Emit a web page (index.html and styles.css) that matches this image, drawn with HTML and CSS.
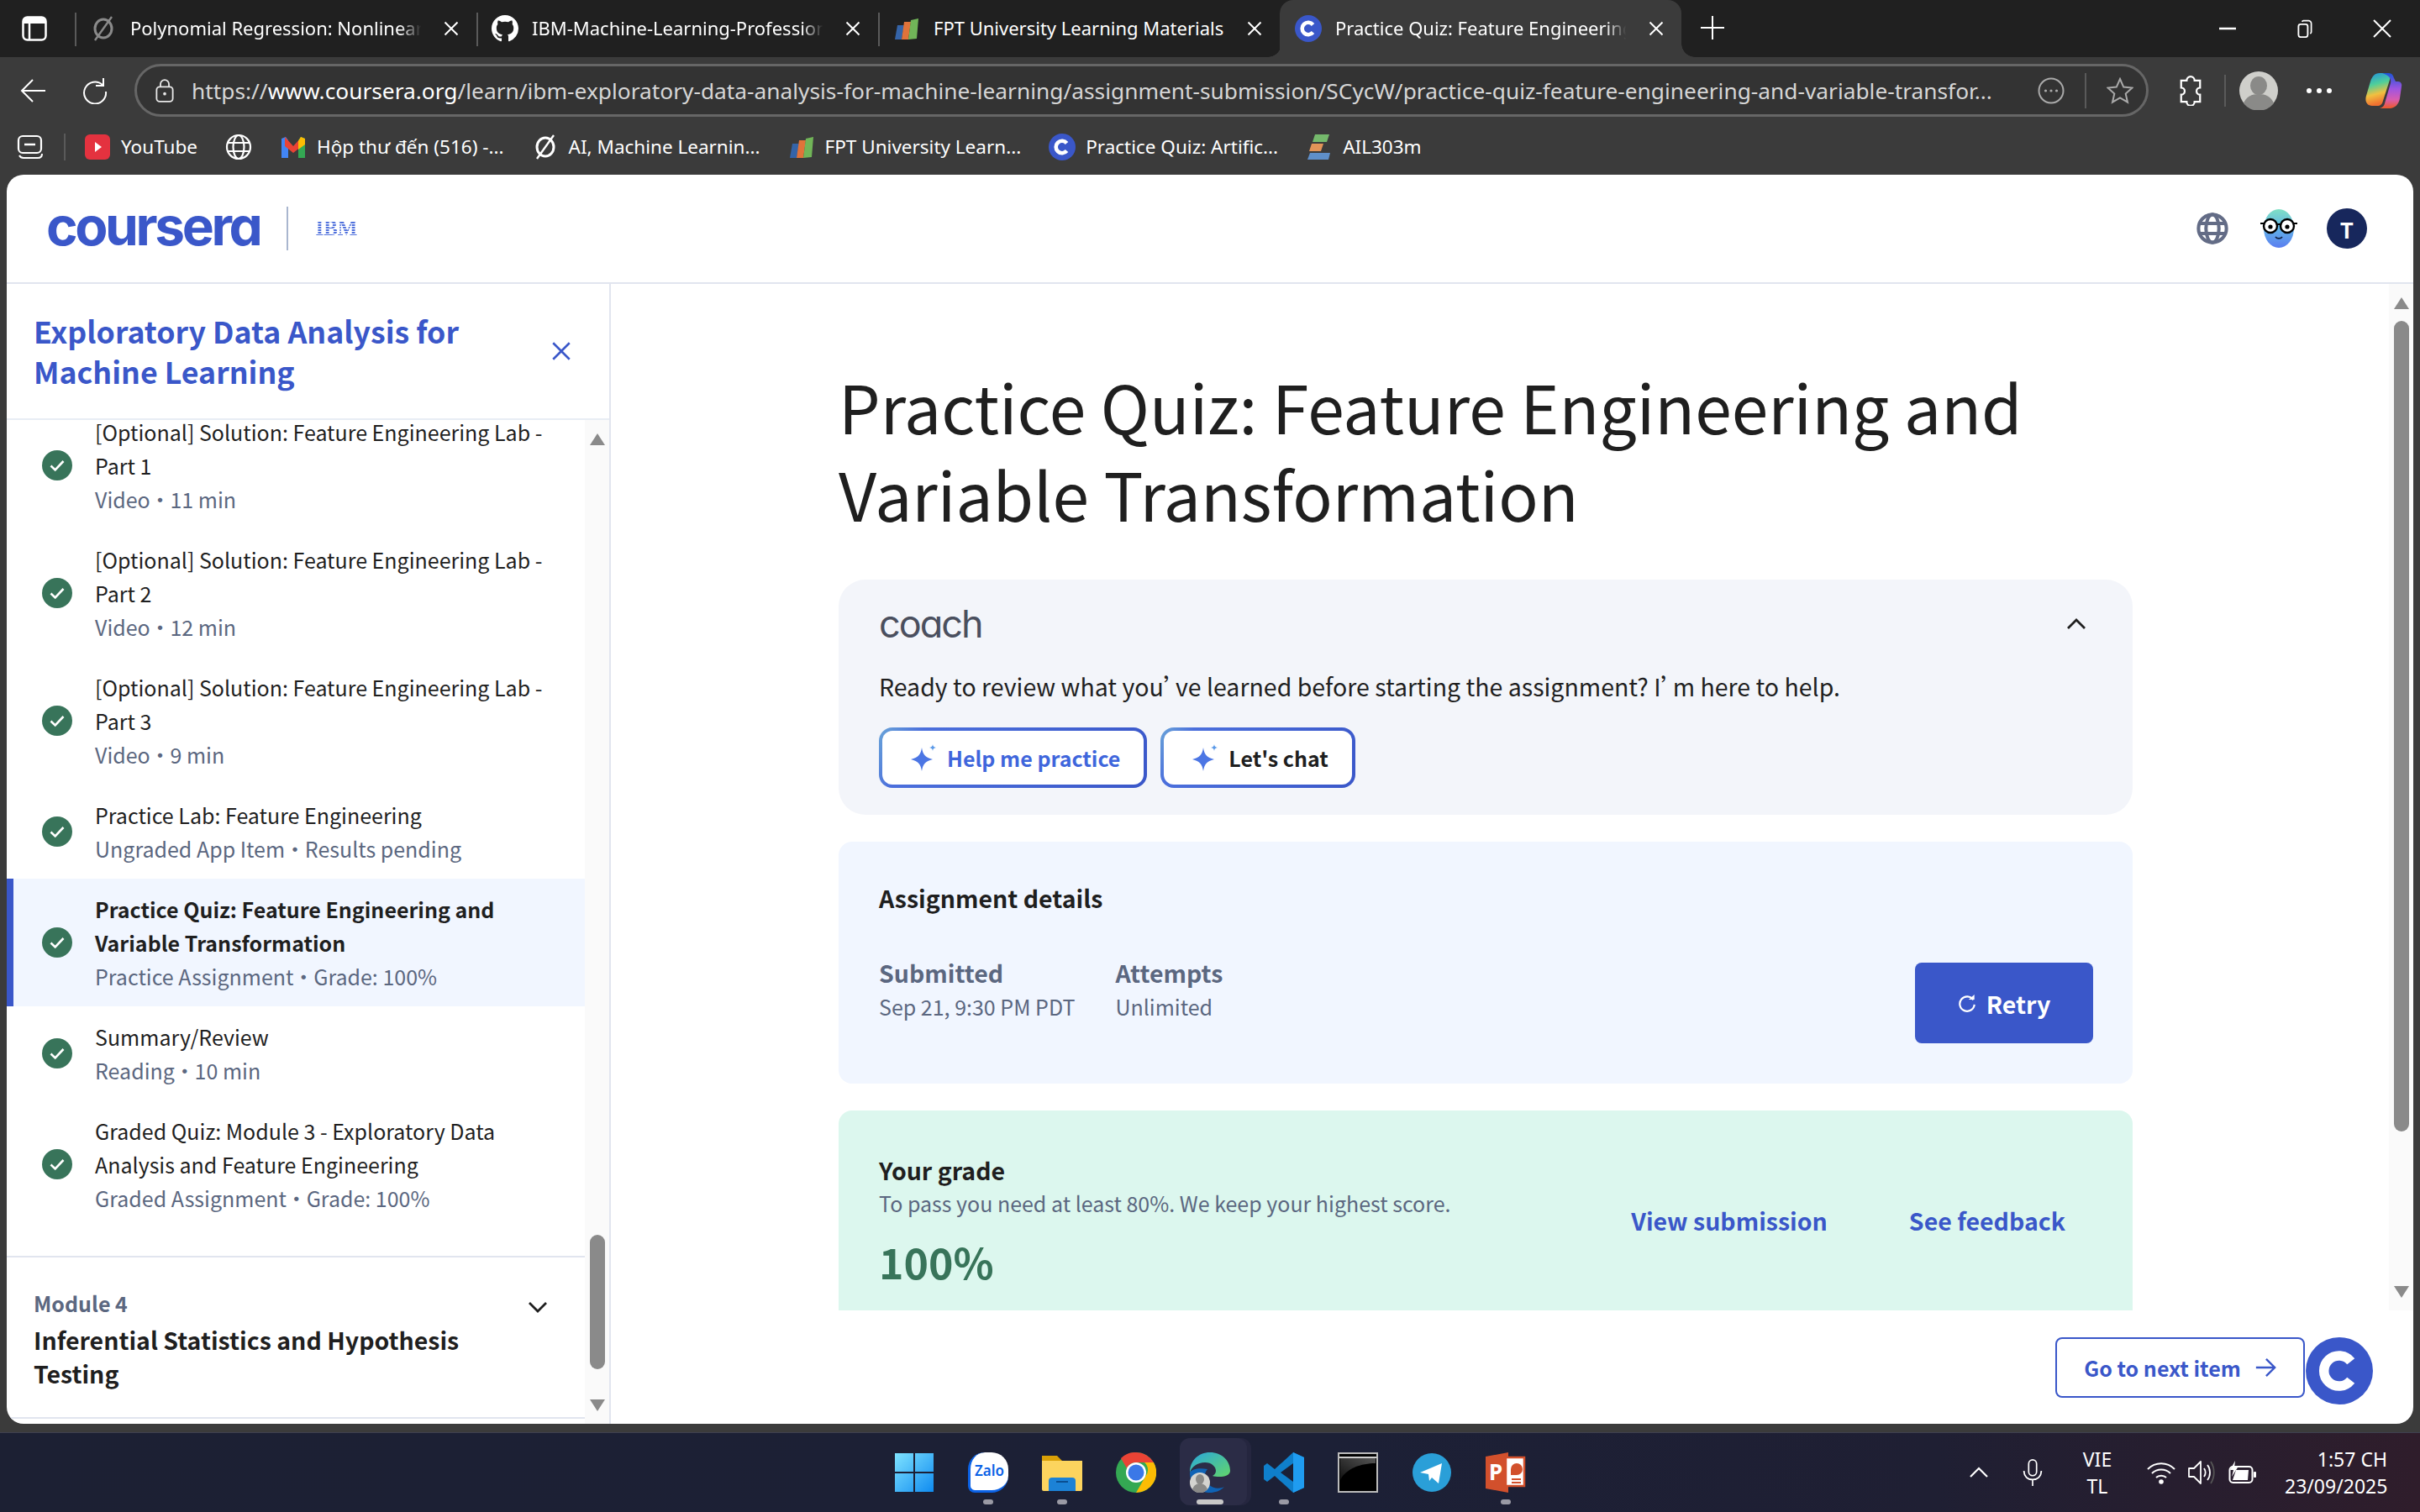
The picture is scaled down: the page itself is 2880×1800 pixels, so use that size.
FILE: index.html
```html
<!DOCTYPE html>
<html lang="en">
<head>
    <meta charset="UTF-8">
    <meta name="viewport" content="width=device-width, initial-scale=1.0">
    <title>Practice Quiz: Feature Engineering and Variable Transformation</title>
    <link rel="stylesheet" href="styles.css">
</head>
<body>
    <svg class="defs" width="0" height="0">
        <symbol id="i-close" viewBox="0 0 24 24"><path d="M3 3l18 18M21 3L3 21" fill="none" stroke="currentColor" stroke-width="2.4"/></symbol>
        <symbol id="i-c" viewBox="0 0 32 32"><circle cx="16" cy="16" r="16" fill="#3a57c9"/><path d="M21.5 11.5a7.2 7.2 0 1 0 0 9" fill="none" stroke="#fff" stroke-width="4.6"/></symbol>
        <symbol id="i-slash" viewBox="0 0 32 32"><ellipse cx="16" cy="16" rx="10" ry="11" fill="none" stroke="currentColor" stroke-width="3"/><path d="M6 30L26 2" stroke="currentColor" stroke-width="2.4"/></symbol>
        <symbol id="i-fpt" viewBox="0 0 32 32"><path d="M5 12h8l-3 17H2z" fill="#3564a8"/><path d="M13 8h8l-3 21h-8z" fill="#e0733a"/><path d="M21 6l9-2-2 24-10 1z" fill="#71b558"/></symbol>
        <symbol id="i-check" viewBox="0 0 36 36"><circle cx="18" cy="18" r="18" fill="#38745a"/><path d="M10.5 18.5l5.2 5L25.5 13" fill="none" stroke="#fff" stroke-width="2.6"/></symbol>
        <symbol id="i-spark" viewBox="0 0 32 32"><path d="M13 4c1.4 8.600 4 11.400 13 14-9 2.600-11.600 5.400-13 14-1.400-8.600-4-11.400-13-14 9-2.600 11.600-5.400 13-14z" fill="#4c76e4"/><path d="M26 0c.4 2.600 1.200 3.500 4 4-2.800.5-3.600 1.400-4 4-.4-2.600-1.200-3.500-4-4 2.800-.5 3.600-1.400 4-4z" fill="#5b9ae8"/></symbol>
        <symbol id="i-globe" viewBox="0 0 32 32"><g fill="none" stroke="currentColor"><circle cx="16" cy="16" r="14"/><ellipse cx="16" cy="16" rx="6.5" ry="14"/><path d="M3 11h26M3 21h26"/></g></symbol>
    </svg>

    <div class="browser">
        <div class="tabbar">
            <div class="tabbar-start">
                <svg class="sidebar-toggle" viewBox="0 0 30 30"><rect x="1.5" y="1.5" width="27" height="27" rx="5" fill="none" stroke="#fff" stroke-width="2.5"/><path d="M2 7a5 5 0 0 1 5-5h16a5 5 0 0 1 5 5v2H2z" fill="#fff"/><path d="M9 8v20" stroke="#fff" stroke-width="2.5"/></svg>
            </div>
            <div class="tab">
                <svg class="tab-icon tab-icon--muted"><use href="#i-slash"/></svg>
                <span class="tab-title">Polynomial Regression: Nonlinear</span>
                <svg class="tab-close"><use href="#i-close"/></svg>
            </div>
            <div class="tab">
                <svg class="tab-icon" viewBox="0 0 16 16"><path fill="#fff" d="M8 0C3.580 0 0 3.580 0 8c0 3.540 2.290 6.530 5.470 7.590.4.070.55-.17.55-.38 0-.19-.01-.82-.01-1.490-2.010.37-2.530-.49-2.690-.94-.09-.23-.48-.94-.82-1.130-.28-.15-.68-.52-.01-.53.63-.01 1.080.58 1.230.82.72 1.210 1.870.87 2.330.66.07-.52.28-.87.51-1.070-1.780-.2-3.640-.89-3.640-3.950 0-.87.31-1.590.82-2.150-.08-.2-.36-1.020.08-2.120 0 0 .67-.21 2.200.82.64-.18 1.320-.27 2-.27.68 0 1.360.09 2 .27 1.530-1.040 2.200-.82 2.200-.82.44 1.100.16 1.920.08 2.120.51.56.82 1.270.82 2.150 0 3.070-1.870 3.750-3.650 3.950.29.25.54.73.54 1.480 0 1.070-.01 1.930-.01 2.200 0 .21.15.46.55.38A8.013 8.013 0 0016 8c0-4.420-3.580-8-8-8z"/></svg>
                <span class="tab-title">IBM-Machine-Learning-Profession</span>
                <svg class="tab-close"><use href="#i-close"/></svg>
            </div>
            <div class="tab">
                <svg class="tab-icon"><use href="#i-fpt"/></svg>
                <span class="tab-title tab-title--full">FPT University Learning Materials</span>
                <svg class="tab-close"><use href="#i-close"/></svg>
            </div>
            <div class="tab tab--active">
                <svg class="tab-icon"><use href="#i-c"/></svg>
                <span class="tab-title">Practice Quiz: Feature Engineering</span>
                <svg class="tab-close"><use href="#i-close"/></svg>
            </div>
            <svg class="new-tab" viewBox="0 0 28 28"><path d="M14 0v28M0 14h28" stroke="#fff" stroke-width="2"/></svg>
            <div class="window-controls">
                <svg viewBox="0 0 22 22"><path d="M1 11h20" stroke="#fff" stroke-width="2.5"/></svg>
                <svg viewBox="0 0 22 26"><rect x="2" y="7" width="13" height="18" rx="3" fill="none" stroke="#fff" stroke-width="2.2"/><path d="M7 3.500a3 3 0 0 1 2-1.500h7a4 4 0 0 1 4 4v12a3 3 0 0 1-1.500 2" fill="none" stroke="#fff" stroke-width="2"/></svg>
                <svg viewBox="0 0 22 22"><path d="M1 1l20 20M21 1L1 21" stroke="#fff" stroke-width="2"/></svg>
            </div>
        </div>

        <div class="toolbar">
            <svg class="tool-icon tool-icon--back" viewBox="0 0 32 32"><path d="M30 16H2M15 3L2 16l13 13" fill="none" stroke="#fff" stroke-width="2"/></svg>
            <svg class="tool-icon tool-icon--reload" viewBox="0 0 32 32"><path d="M26 9a13 13 0 1 0 4 8" fill="none" stroke="#fff" stroke-width="2"/><path d="M27 1v9h-9" fill="none" stroke="#fff" stroke-width="2"/></svg>
            <div class="address">
                <svg class="lock" viewBox="0 0 24 32"><rect x="1.5" y="11" width="21" height="19" rx="4" fill="none" stroke="#e8e8e8" stroke-width="2"/><path d="M6.500 11V7.500a5.500 5.500 0 0 1 11 0V11" fill="none" stroke="#e8e8e8" stroke-width="2"/><circle cx="12" cy="20" r="2" fill="#e8e8e8"/></svg>
                <span class="url"><span class="url-dim">https://</span>www.coursera.org<span class="url-dim">/learn/ibm-exploratory-data-analysis-for-machine-learning/assignment-submission/SCycW/practice-quiz-feature-engineering-and-variable-transfor...</span></span>
                <svg class="addr-more" viewBox="0 0 32 32"><circle cx="16" cy="16" r="14.5" fill="none" stroke="#aaa" stroke-width="2"/><circle cx="9.5" cy="16" r="1.6" fill="#aaa"/><circle cx="16" cy="16" r="1.6" fill="#aaa"/><circle cx="22.5" cy="16" r="1.6" fill="#aaa"/></svg>
                <span class="addr-sep"></span>
                <svg class="addr-star" viewBox="0 0 32 32"><path d="M16 2l4.200 9.600 10.300 1-7.800 6.900 2.300 10.200L16 24.400l-9 5.300 2.300-10.200-7.800-6.900 10.300-1z" fill="none" stroke="#aaa" stroke-width="2"/></svg>
            </div>
            <svg class="extensions" viewBox="0 0 32 38"><path d="M11 6a5 5 0 0 1 10 0h7v9a4.500 4.500 0 0 0 0 9v9h-7a5 5 0 0 1-10 0H4v-9a4.500 4.500 0 0 0 0-9V6z" fill="none" stroke="#fff" stroke-width="2.4"/></svg>
            <span class="tool-sep"></span>
            <svg class="profile" viewBox="0 0 46 46"><circle cx="23" cy="23" r="23" fill="#cfcfcb"/><ellipse cx="23" cy="17" rx="10" ry="11" fill="#8a8a88"/><path d="M5 38c3-8 10-11 18-11s15 3 18 11a23 23 0 0 1-36 0z" fill="#8a8a88"/></svg>
            <span class="tool-dots"><i></i><i></i><i></i></span>
            <svg class="copilot" viewBox="0 0 44 44">
                <defs>
                    <linearGradient id="cp-a" x1="0" y1="0" x2="0.2" y2="1"><stop offset="0" stop-color="#1f8ee0"/><stop offset=".4" stop-color="#4fcf9a"/><stop offset=".7" stop-color="#f0c040"/><stop offset="1" stop-color="#f07030"/></linearGradient>
                    <linearGradient id="cp-b" x1="0.5" y1="0" x2="0.5" y2="1"><stop offset="0" stop-color="#1d55d8"/><stop offset=".45" stop-color="#a055e0"/><stop offset=".75" stop-color="#d85cb0"/><stop offset="1" stop-color="#ee5a28"/></linearGradient>
                </defs>
                <path d="M26 1h-9C11 1 8 5 6 11L1 28c-2 7 1 12 7 12h6c4 0 6-2 7-6l8-25c1-4 0-8-3-8z" fill="url(#cp-a)"/>
                <path d="M20 1h8c3 0 5 2 6 6l2 4h3c3 0 5 3 4 6l-2 14c-1 7-6 12-12 12h-14c4 0 7-2 8-6l7-24c1-5-1-9-10-12z" fill="url(#cp-b)"/>
            </svg>
        </div>

        <div class="bookmarks">
            <svg class="bm-collections" viewBox="0 0 32 32"><rect x="2" y="3" width="27" height="20" rx="5" fill="none" stroke="#fff" stroke-width="2.2"/><path d="M3 26c1 2 3 3 5 3h17c3 0 5-2 5-5" fill="none" stroke="#fff" stroke-width="2"/><path d="M9 13h13" stroke="#fff" stroke-width="2.5"/></svg>
            <span class="bm-sep"></span>
            <div class="bm"><svg viewBox="0 0 32 32"><rect x="1" y="1" width="30" height="30" rx="6" fill="#e4323f"/><path d="M13 10l8 6-8 6z" fill="#fff"/></svg><span>YouTube</span></div>
            <div class="bm"><svg class="bm-white"><use href="#i-globe"/></svg></div>
            <div class="bm"><svg viewBox="0 0 32 32"><path d="M2 29V6l5-2 3 4v21z" fill="#4285f4"/><path d="M30 29V6l-5-2-3 4v21z" fill="#34a853"/><path d="M6 4l10 11L26 4v11l-10 8L6 15z" fill="#ea4335"/><path d="M25 4l5 2v7l-8 6V9z" fill="#fbbc04"/></svg><span>Hộp thư đến (516) -...</span></div>
            <div class="bm"><svg class="bm-slash"><use href="#i-slash"/></svg><span>AI, Machine Learnin...</span></div>
            <div class="bm"><svg><use href="#i-fpt"/></svg><span>FPT University Learn...</span></div>
            <div class="bm"><svg><use href="#i-c"/></svg><span>Practice Quiz: Artific...</span></div>
            <div class="bm"><svg viewBox="0 0 32 32"><path d="M11 1h17l-3 9H8z" fill="#75b96c"/><path d="M7 12h14l-3 9H4z" fill="#e29458"/><path d="M5 23h24l-2 8H2z" fill="#5f8fc9"/></svg><span>AIL303m</span></div>
        </div>

        <div class="page">
            <header class="page-head">
                <span class="logo">coursera</span>
                <span class="logo-sep"></span>
                <span class="logo-ibm">IBM</span>
                <div class="head-actions">
                    <svg class="head-globe"><use href="#i-globe"/></svg>
                    <svg class="head-coach" viewBox="0 0 46 46">
                        <defs><linearGradient id="co-a" x1="0.5" y1="0" x2="0.5" y2="1"><stop offset="0" stop-color="#7fe0c4"/><stop offset=".5" stop-color="#62b3e8"/><stop offset="1" stop-color="#5a7df0"/></linearGradient></defs>
                        <ellipse cx="23" cy="23" rx="18" ry="23" fill="url(#co-a)"/>
                        <circle cx="13" cy="20" r="8" fill="#fff" stroke="#000" stroke-width="2.4"/>
                        <circle cx="33" cy="20" r="8" fill="#fff" stroke="#000" stroke-width="2.4"/>
                        <path d="M21 18h4M5 17H1M41 17h4" stroke="#000" stroke-width="2"/>
                        <circle cx="13" cy="21" r="2.6"/><circle cx="33" cy="21" r="2.6"/>
                        <path d="M19 33c2 2.500 6 2.500 8 0" fill="none" stroke="#102040" stroke-width="1.8"/>
                    </svg>
                    <span class="head-user">T</span>
                </div>
            </header>

            <div class="page-body">
                <aside class="sidebar">
                    <div class="side-head">
                        <h2>Exploratory Data Analysis for Machine Learning</h2>
                        <svg class="side-close"><use href="#i-close"/></svg>
                    </div>
                    <div class="side-scroll">
                        <div class="side-list">
                            <div class="item">
                                <svg class="item-check"><use href="#i-check"/></svg>
                                <div class="item-text"><div class="item-name">[Optional] Solution: Feature Engineering Lab - Part 1</div><div class="item-meta">Video • 11 min</div></div>
                            </div>
                            <div class="item">
                                <svg class="item-check"><use href="#i-check"/></svg>
                                <div class="item-text"><div class="item-name">[Optional] Solution: Feature Engineering Lab - Part 2</div><div class="item-meta">Video • 12 min</div></div>
                            </div>
                            <div class="item">
                                <svg class="item-check"><use href="#i-check"/></svg>
                                <div class="item-text"><div class="item-name">[Optional] Solution: Feature Engineering Lab - Part 3</div><div class="item-meta">Video • 9 min</div></div>
                            </div>
                            <div class="item">
                                <svg class="item-check"><use href="#i-check"/></svg>
                                <div class="item-text"><div class="item-name">Practice Lab: Feature Engineering</div><div class="item-meta">Ungraded App Item • Results pending</div></div>
                            </div>
                            <div class="item item--current">
                                <svg class="item-check"><use href="#i-check"/></svg>
                                <div class="item-text"><div class="item-name">Practice Quiz: Feature Engineering and Variable Transformation</div><div class="item-meta">Practice Assignment • Grade: 100%</div></div>
                            </div>
                            <div class="item">
                                <svg class="item-check"><use href="#i-check"/></svg>
                                <div class="item-text"><div class="item-name">Summary/Review</div><div class="item-meta">Reading • 10 min</div></div>
                            </div>
                            <div class="item">
                                <svg class="item-check"><use href="#i-check"/></svg>
                                <div class="item-text"><div class="item-name">Graded Quiz: Module 3 - Exploratory Data Analysis and Feature Engineering</div><div class="item-meta">Graded Assignment • Grade: 100%</div></div>
                            </div>
                            <div class="module">
                                <div class="module-text">
                                    <div class="module-label">Module 4</div>
                                    <div class="module-title">Inferential Statistics and Hypothesis Testing</div>
                                </div>
                                <svg class="module-chevron" viewBox="0 0 24 14"><path d="M2 2l10 10L22 2" fill="none" stroke="#1f1f1f" stroke-width="2.8"/></svg>
                            </div>
                        </div>
                        <div class="scrollbar scrollbar--side">
                            <span class="sb-up"></span>
                            <span class="sb-thumb"></span>
                            <span class="sb-down"></span>
                        </div>
                    </div>
                </aside>

                <main class="main">
                    <div class="main-scroll">
                        <div class="content">
                            <h1>Practice Quiz: Feature Engineering and Variable Transformation</h1>

                            <section class="coach">
                                <div class="coach-top">
                                    <span class="coach-logo">coach</span>
                                    <svg class="coach-chevron" viewBox="0 0 24 14"><path d="M2 12L12 2l10 10" fill="none" stroke="#1f1f1f" stroke-width="2.8"/></svg>
                                </div>
                                <p class="coach-text">Ready to review what you’ve learned before starting the assignment? I’m here to help.</p>
                                <div class="coach-actions">
                                    <button class="coach-btn coach-btn--blue"><svg><use href="#i-spark"/></svg>Help me practice</button>
                                    <button class="coach-btn"><svg><use href="#i-spark"/></svg>Let's chat</button>
                                </div>
                            </section>

                            <section class="details">
                                <h3>Assignment details</h3>
                                <div class="details-row">
                                    <div class="stat">
                                        <div class="stat-label">Submitted</div>
                                        <div class="stat-value">Sep 21, 9:30 PM PDT</div>
                                    </div>
                                    <div class="stat">
                                        <div class="stat-label">Attempts</div>
                                        <div class="stat-value">Unlimited</div>
                                    </div>
                                    <button class="retry"><svg viewBox="0 0 24 24"><path d="M20 8a9.500 9.500 0 1 0 1.500 6" fill="none" stroke="#fff" stroke-width="2.4"/><path d="M14 7.500h7.500V1z" fill="#fff"/></svg>Retry</button>
                                </div>
                            </section>

                            <section class="grade">
                                <div>
                                    <h3>Your grade</h3>
                                    <p class="grade-note">To pass you need at least 80%. We keep your highest score.</p>
                                    <div class="grade-value">100%</div>
                                </div>
                                <div class="grade-links">
                                    <a>View submission</a>
                                    <a>See feedback</a>
                                </div>
                            </section>
                        </div>
                        <div class="scrollbar scrollbar--main">
                            <span class="sb-up"></span>
                            <span class="sb-thumb"></span>
                            <span class="sb-down"></span>
                        </div>
                    </div>
                    <div class="main-foot">
                        <button class="next">Go to next item<svg viewBox="0 0 28 28"><path d="M2 14h23M15 3l11 11-11 11" fill="none" stroke="#3a57c9" stroke-width="2.6"/></svg></button>
                        <svg class="float-c"><use href="#i-c"/></svg>
                    </div>
                </main>
            </div>
        </div>
    </div>

    <footer class="taskbar">
        <div></div>
        <div class="task-apps">
            <div class="task-app">
                <svg viewBox="0 0 48 48">
                    <defs><linearGradient id="win-a" x1="0" y1="0" x2="1" y2="1"><stop offset="0" stop-color="#7fe3ff"/><stop offset="1" stop-color="#0f8bf0"/></linearGradient></defs>
                    <path d="M1 1h22v22H1zM25 1h22v22H25zM1 25h22v22H1zM25 25h22v22H25z" fill="url(#win-a)"/>
                </svg>
            </div>
            <div class="task-app">
                <div class="zalo">Zalo</div>
                <i class="task-dot"></i>
            </div>
            <div class="task-app">
                <svg viewBox="0 0 48 48"><path d="M0 4h18l6 6h24v34H0z" fill="#d9a006"/><path d="M0 10h48v34a2 2 0 0 1-2 2H2a2 2 0 0 1-2-2z" fill="#fcd45e"/><path d="M8 34a4 4 0 0 1 4-4h24a4 4 0 0 1 4 4v12H8z" fill="#1c82d6"/><path d="M17 35h14" stroke="#0a4f92" stroke-width="2"/></svg>
                <i class="task-dot"></i>
            </div>
            <div class="task-app">
                <svg viewBox="0 0 48 48"><circle cx="24" cy="24" r="24" fill="#34a853"/><path d="M24 0a24 24 0 0 1 21 12H24a12 12 0 0 0-11 7L6 7A24 24 0 0 1 24 0z" fill="#ea4335"/><path d="M45 12a24 24 0 0 1-21 36l11-19a12 12 0 0 0-1-17z" fill="#fbbc04"/><circle cx="24" cy="24" r="12" fill="#fff"/><circle cx="24" cy="24" r="9.5" fill="#3b78e7"/></svg>
            </div>
            <div class="task-app task-app--active">
                <svg viewBox="0 0 48 48">
                    <defs><linearGradient id="edge-a" x1="0" y1="0" x2="1" y2="1"><stop offset="0" stop-color="#2aa6dc"/><stop offset="1" stop-color="#62d66a"/></linearGradient></defs>
                    <path d="M24 0C10 0 0 10 0 24c2-7 9-12 18-12 8 0 13 5 13 10 0 3-2 5-4 6 6 2 21 2 21-6C48 10 38 0 24 0z" fill="url(#edge-a)"/>
                    <path d="M0 24c0 14 10 24 24 24 6 0 12-2 17-7-6 3-14 2-19-3-5-4-6-12-1-18-10-2-19 0-21 4z" fill="#0f63b5"/>
                    <ellipse cx="12" cy="36" rx="12" ry="12" fill="#d4d4d0"/><ellipse cx="12" cy="32" rx="5" ry="6" fill="#8a8a88"/><path d="M3 44c2-5 5-7 9-7s7 2 9 7a12 12 0 0 1-18 0z" fill="#8a8a88"/>
                </svg>
                <i class="task-dot task-dot--wide"></i>
            </div>
            <div class="task-app">
                <svg viewBox="0 0 48 48"><path d="M35 0l13 6v36l-13 6-22-20-9 7-4-3V16l4-3 9 7z" fill="#0f7fcb"/><path d="M35 0l13 6v36l-13 6z" fill="#1f9cf0"/><path d="M35 13L20 24l15 11z" fill="#1a2036"/></svg>
                <i class="task-dot"></i>
            </div>
            <div class="task-app">
                <svg viewBox="0 0 48 48">
                    <defs><linearGradient id="term-a" x1="1" y1="0" x2="0" y2="1"><stop offset="0" stop-color="#555"/><stop offset="1" stop-color="#111"/></linearGradient></defs>
                    <rect x="1" y="1" width="46" height="46" fill="#000" stroke="#bbb" stroke-width="2"/><path d="M2 5h44v2H2z" fill="#ccc"/><path d="M3 7h42v6C28 13 10 19 3 33z" fill="url(#term-a)"/>
                </svg>
            </div>
            <div class="task-app">
                <svg viewBox="0 0 48 48"><circle cx="24" cy="24" r="23" fill="#2a9fd8"/><path d="M10 24L36 13l-4 24-8-7-3 4-1-8z" fill="#fff"/></svg>
            </div>
            <div class="task-app">
                <svg viewBox="0 0 48 48">
                    <path d="M0 5l27-5v48L0 43z" fill="#d2502c"/>
                    <rect x="24" y="6" width="22" height="34" fill="#fff" stroke="#d2502c" stroke-width="2.5"/>
                    <path d="M30 20a7 7 0 1 1 7 7h-7z" fill="#d2502c"/><path d="M31 32h11M31 36h11" stroke="#d2502c" stroke-width="2"/>
                    <text x="4" y="33" class="ppt-letter">P</text>
                </svg>
                <i class="task-dot"></i>
            </div>
        </div>
        <div class="tray">
            <svg class="tray-caret" viewBox="0 0 24 14"><path d="M2 12L12 2l10 10" fill="none" stroke="#fff" stroke-width="2.2"/></svg>
            <svg class="tray-mic" viewBox="0 0 24 34"><rect x="7" y="1" width="10" height="20" rx="5" fill="none" stroke="#fff" stroke-width="1.8"/><path d="M1 15c0 7 5 11 11 11s11-4 11-11M12 26v8" fill="none" stroke="#fff" stroke-width="1.8"/></svg>
            <div class="tray-lang"><div>VIE</div><div>TL</div></div>
            <svg class="tray-wifi" viewBox="0 0 34 28"><g fill="none" stroke="#fff" stroke-width="2"><path d="M1 10c9-9 23-9 32 0"/><path d="M6 15c6-6 16-6 22 0"/><path d="M11 20c3-3 9-3 12 0"/></g><circle cx="17" cy="25" r="2.8" fill="#fff"/></svg>
            <svg class="tray-sound" viewBox="0 0 34 32"><path d="M2 11h6l8-8v26l-8-8H2z" fill="none" stroke="#fff" stroke-width="1.8" stroke-linejoin="round"/><path d="M20 11c2 3 2 7 0 10M24 7c4 5 4 13 0 18" fill="none" stroke="#fff" stroke-width="1.8"/><path d="M28 3c5 8 5 18 0 26" fill="none" stroke="#555" stroke-width="1.8"/></svg>
            <svg class="tray-batt" viewBox="0 0 34 28"><rect x="1.5" y="7" width="27" height="19" rx="4" fill="none" stroke="#fff" stroke-width="2"/><path d="M5 23l4-12h15l-1 12z" fill="#fff"/><rect x="30" y="13" width="3" height="7" rx="1" fill="#fff"/><path d="M8 0L2 11h4l-2 8 7-11H7z" fill="#fff"/></svg>
            <div class="tray-clock"><div>1:57 CH</div><div>23/09/2025</div></div>
        </div>
    </footer>
</body>
</html>
```

FILE: styles.css
```css
* {
    box-sizing: border-box;
}
html, body {
    margin: 0;
    padding: 0;
}
body {
    width: 2880px;
    height: 1800px;
    overflow: hidden;
    background: #3b3b3b;
    font-family: "Noto Sans CJK SC", "Noto Sans", sans-serif;
    display: flex;
    flex-direction: column;
}
.defs {
    position: absolute;
}
h1, h2, h3, p {
    margin: 0;
}
button {
    font-family: inherit;
    cursor: pointer;
}

/* browser chrome */
.browser {
    height: 1705px;
    padding-bottom: 10px;
    display: flex;
    flex-direction: column;
    font-family: "Noto Sans", "Open Sans", sans-serif;
}
.tabbar {
    height: 68px;
    background: #202020;
    display: flex;
    align-items: center;
    flex: none;
}
.tabbar-start {
    width: 89px;
    padding-left: 26px;
    display: flex;
}
.sidebar-toggle {
    width: 30px;
    height: 30px;
}
.tab {
    width: 478px;
    height: 68px;
    padding: 0 17px 0 16px;
    display: flex;
    align-items: center;
    color: #fff;
    border-left: 2px solid transparent;
    position: relative;
}
.tab::before {
    content: "";
    position: absolute;
    left: -2px;
    top: 15px;
    height: 40px;
    border-left: 2px solid #5a5a5a;
}
.tab-icon {
    width: 32px;
    height: 32px;
    flex: none;
}
.tab-icon--muted {
    color: #8a8a8a;
}
.tab-title {
    flex: 1;
    margin-left: 16px;
    padding-bottom: 3px;
    font-size: 22px;
    line-height: 36px;
    white-space: nowrap;
    overflow: hidden;
    -webkit-mask-image: linear-gradient(to right, #000 90%, transparent 97%);
    mask-image: linear-gradient(to right, #000 90%, transparent 97%);
}
.tab-title--full {
    -webkit-mask-image: none;
    mask-image: none;
}
.tab-close {
    width: 20px;
    height: 20px;
    margin-left: 15px;
    margin-right: 3px;
    flex: none;
    color: #fff;
}
.tab--active {
    background: #3b3b3b;
    border-radius: 16px 16px 0 0;
}
.tab--active::before {
    left: -16px;
    top: auto;
    bottom: 0;
    width: 16px;
    height: 16px;
    border: 0;
    background: radial-gradient(circle at 0 0, transparent 15.5px, #3b3b3b 16px);
}
.tab--active::after {
    content: "";
    position: absolute;
    right: -16px;
    bottom: 0;
    width: 16px;
    height: 16px;
    background: radial-gradient(circle at 100% 0, transparent 15.5px, #3b3b3b 16px);
}
.new-tab {
    width: 28px;
    height: 28px;
    margin-left: 23px;
    margin-top: -2px;
}
.window-controls {
    margin-left: auto;
    margin-right: 34px;
    display: flex;
    gap: 70px;
    align-items: center;
}
.window-controls svg {
    width: 22px;
    height: 22px;
}
.toolbar {
    height: 71px;
    background: #3b3b3b;
    display: flex;
    align-items: center;
    flex: none;
    padding-top: 8px;
}
.tool-icon {
    width: 32px;
    height: 32px;
    flex: none;
}
.tool-icon--back {
    margin-left: 24px;
}
.tool-icon--reload {
    margin-left: 40px;
}
.address {
    width: 2397px;
    height: 63px;
    margin-left: 32px;
    border: 3px solid #666;
    border-radius: 32px;
    background: #333;
    display: flex;
    align-items: center;
    padding-left: 22px;
    flex: none;
}
.lock {
    width: 22px;
    height: 30px;
    flex: none;
}
.url {
    margin-left: 21px;
    width: 2162px;
    font-size: 26.3px;
    line-height: 40px;
    color: #fff;
    white-space: nowrap;
    overflow: hidden;
}
.url-dim {
    color: #d6d6d6;
}
.addr-more {
    width: 32px;
    height: 32px;
    margin-left: 35px;
    flex: none;
}
.addr-sep {
    height: 42px;
    border-left: 2px solid #5a5a5a;
    margin-left: 24px;
}
.addr-star {
    width: 32px;
    height: 32px;
    margin-left: 24px;
    flex: none;
}
.extensions {
    width: 30px;
    height: 36px;
    margin-left: 35px;
    flex: none;
}
.tool-sep {
    height: 38px;
    border-left: 2px solid #5a5a5a;
    margin-left: 25px;
}
.profile {
    width: 46px;
    height: 46px;
    margin-left: 16px;
    flex: none;
}
.tool-dots {
    margin-left: 34px;
    display: flex;
    gap: 6px;
}
.tool-dots i {
    width: 6px;
    height: 6px;
    border-radius: 50%;
    background: #fff;
}
.copilot {
    width: 44px;
    height: 44px;
    margin-left: 40px;
    flex: none;
}
.bookmarks {
    height: 69px;
    background: #3b3b3b;
    display: flex;
    align-items: center;
    flex: none;
    padding-left: 20px;
    padding-top: 2px;
}
.bm-collections {
    width: 32px;
    height: 32px;
    flex: none;
}
.bm-sep {
    height: 32px;
    border-left: 2px solid #5a5a5a;
    margin: 0 22px 0 24px;
}
.bm {
    display: flex;
    align-items: center;
    gap: 12px;
    margin-right: 33px;
    color: #fff;
    font-size: 22.5px;
    line-height: 32px;
    white-space: nowrap;
}
.bm svg {
    width: 32px;
    height: 32px;
    flex: none;
}
.bm-white {
    color: #fff;
    stroke-width: 2.2;
}
.bm-slash {
    color: #fff;
}

/* page */
.page {
    flex: 1;
    margin: 0 8px;
    background: #fff;
    border-radius: 20px;
    overflow: hidden;
    display: flex;
    flex-direction: column;
    font-family: "Noto Sans CJK SC", "Noto Sans", sans-serif;
    font-feature-settings: "palt";
    color: #1f1f1f;
}
.page-head {
    height: 130px;
    border-bottom: 2px solid #e1e5ef;
    display: flex;
    align-items: center;
    padding: 0 55px 0 47px;
    flex: none;
}
.logo {
    font-family: Inter, "Noto Sans", sans-serif;
    font-feature-settings: "cv11";
    font-weight: 700;
    font-size: 64px;
    line-height: 72px;
    letter-spacing: -3.4px;
    color: #3a57c9;
    margin-top: -6px;
}
.logo-sep {
    height: 52px;
    border-left: 2px solid #a9b6cf;
    margin-left: 32px;
}
.logo-ibm {
    margin-left: 32px;
    font-family: "Liberation Serif", serif;
    font-weight: 700;
    font-size: 25px;
    line-height: 22px;
    color: transparent;
    background: repeating-linear-gradient(to bottom, #4f70dc 0, #4f70dc 2px, #fff 2px, #fff 3px);
    -webkit-background-clip: text;
    background-clip: text;
}
.head-actions {
    margin-left: auto;
    display: flex;
    align-items: center;
}
.head-globe {
    width: 38px;
    height: 38px;
    color: #636c86;
    stroke-width: 3.4;
}
.head-coach {
    width: 46px;
    height: 46px;
    margin-left: 37px;
}
.head-user {
    width: 48px;
    height: 48px;
    margin-left: 34px;
    border-radius: 50%;
    background: #17275c;
    color: #fff;
    font-size: 26px;
    font-weight: 600;
    display: flex;
    align-items: center;
    justify-content: center;
}
.page-body {
    flex: 1;
    display: flex;
    min-height: 0;
}

/* sidebar */
.sidebar {
    width: 719px;
    border-right: 2px solid #e1e5ef;
    display: flex;
    flex-direction: column;
    flex: none;
}
.side-head {
    height: 162px;
    border-bottom: 2px solid #e8edf4;
    padding: 0 44px 0 32px;
    display: flex;
    align-items: center;
    justify-content: space-between;
    flex: none;
}
.side-head h2 {
    width: 540px;
    font-size: 35.7px;
    line-height: 48px;
    font-weight: 600;
    color: #3a57c9;
}
.side-close {
    width: 26px;
    height: 26px;
    color: #3a57c9;
}
.side-scroll {
    flex: 1;
    min-height: 0;
    display: flex;
    overflow: hidden;
}
.side-list {
    width: 688px;
    margin-top: -22px;
    flex: none;
}
.item {
    padding: 16px 40px 16px 42px;
    display: flex;
    align-items: center;
    gap: 27px;
}
.item-check {
    width: 36px;
    height: 36px;
    flex: none;
}
.item-name {
    font-size: 25px;
    line-height: 40px;
    color: #1f1f1f;
}
.item-meta {
    font-size: 25px;
    line-height: 40px;
    color: #5b6780;
}
.item--current {
    background: #f1f6ff;
    border-left: 8px solid #3a57c9;
    padding-left: 34px;
}
.item--current .item-name {
    font-weight: 600;
}
.module {
    margin-top: 33px;
    border-top: 2px solid #e1e5ef;
    border-bottom: 2px solid #e1e5ef;
    padding: 32px;
    display: flex;
    justify-content: space-between;
    align-items: flex-start;
}
.module-label {
    font-size: 25px;
    line-height: 40px;
    font-weight: 600;
    color: #5b6780;
    margin-top: 2px;
    margin-bottom: 4px;
}
.module-title {
    width: 520px;
    font-size: 28.5px;
    line-height: 40px;
    font-weight: 600;
    color: #1f1f1f;
}
.module-chevron {
    width: 24px;
    height: 14px;
    margin-top: 20px;
    margin-right: 12px;
}
.scrollbar {
    display: flex;
    flex-direction: column;
    align-items: center;
    background: #fafafa;
    flex: 1;
    padding: 16px 0 15px;
}
.sb-up, .sb-down {
    width: 0;
    height: 0;
    border-left: 9px solid transparent;
    border-right: 9px solid transparent;
}
.sb-up {
    border-bottom: 14px solid #8a8a8a;
}
.sb-down {
    border-top: 14px solid #8a8a8a;
    margin-top: auto;
}
.sb-thumb {
    width: 18px;
    background: #8a8a8a;
    border-radius: 9px;
}
.scrollbar--side .sb-thumb {
    height: 160px;
    margin-top: 940px;
}
.scrollbar--main {
    width: 29px;
    flex: none;
}
.scrollbar--main .sb-thumb {
    height: 965px;
    margin-top: 14px;
}

/* main column */
.main {
    flex: 1;
    display: flex;
    flex-direction: column;
    min-width: 0;
}
.main-scroll {
    height: 1222px;
    display: flex;
    flex: none;
    overflow: hidden;
}
.content {
    flex: 1;
    padding: 93px 305px 0 271px;
    min-width: 0;
}
.content h1 {
    font-size: 78.5px;
    line-height: 104px;
    font-weight: 400;
    color: #1f1f1f;
}
.coach {
    margin-top: 51px;
    height: 280px;
    background: #f3f5fa;
    border-radius: 32px;
    padding: 32px 48px;
}
.coach-top {
    height: 42px;
    display: flex;
    align-items: center;
    justify-content: space-between;
}
.coach-logo {
    font-family: Inter, "Noto Sans", sans-serif;
    font-feature-settings: "cv11";
    font-size: 45px;
    line-height: 42px;
    letter-spacing: -2px;
    color: #4a4f5e;
}
.coach-chevron {
    width: 24px;
    height: 14px;
    margin-right: 7px;
}
.coach-text {
    margin-top: 29px;
    font-size: 28.5px;
    line-height: 48px;
}
.coach-actions {
    margin-top: 25px;
    display: flex;
    gap: 16px;
}
.coach-btn {
    height: 72px;
    padding: 0 28px 0 34px;
    border: 4px solid transparent;
    border-radius: 16px;
    background: linear-gradient(#fff, #fff) padding-box, linear-gradient(120deg, #6aa5d8, #4b6fdc 15%, #3a57c9) border-box;
    font-size: 25px;
    font-weight: 600;
    color: #1f1f1f;
    display: flex;
    align-items: center;
    gap: 11px;
}
.coach-btn svg {
    width: 32px;
    height: 32px;
}
.coach-btn--blue {
    color: #3f66dc;
}
.details {
    margin-top: 32px;
    height: 288px;
    background: #f1f6ff;
    border-radius: 16px;
    padding: 47px 47px 0 48px;
}
.details h3, .grade h3 {
    font-size: 28.5px;
    line-height: 40px;
    font-weight: 600;
    color: #1f1f1f;
}
.details-row {
    margin-top: 49px;
    display: flex;
    align-items: flex-start;
    gap: 48px;
}
.stat-label {
    font-size: 28.5px;
    line-height: 40px;
    font-weight: 600;
    color: #5b6780;
}
.stat-value {
    font-size: 25px;
    line-height: 40px;
    color: #5b6780;
}
.retry {
    margin-left: auto;
    margin-top: 8px;
    width: 212px;
    height: 96px;
    border: 0;
    border-radius: 8px;
    background: #3a57c9;
    color: #fff;
    font-size: 28.5px;
    font-weight: 600;
    display: flex;
    align-items: center;
    justify-content: center;
    gap: 12px;
}
.retry svg {
    width: 22px;
    height: 22px;
}
.grade {
    margin-top: 32px;
    height: 262px;
    background: #dcf7ee;
    border-radius: 16px;
    padding: 0 80px 0 48px;
    display: flex;
    align-items: center;
    justify-content: space-between;
}
.grade-note {
    font-size: 25px;
    line-height: 38px;
    color: #5b6780;
}
.grade-value {
    margin-top: 18px;
    font-size: 50px;
    line-height: 64px;
    font-weight: 600;
    color: #38745a;
}
.grade-links {
    display: flex;
    gap: 97px;
}
.grade-links a {
    font-size: 28.5px;
    line-height: 40px;
    font-weight: 600;
    color: #3a57c9;
}
.main-foot {
    flex: 1;
    padding: 32px 129px 0 0;
    display: flex;
    justify-content: flex-end;
    align-items: flex-start;
    position: relative;
}
.next {
    width: 297px;
    height: 72px;
    border: 2.5px solid #3a57c9;
    border-radius: 8px;
    background: #fff;
    color: #3a57c9;
    font-size: 25px;
    font-weight: 600;
    display: flex;
    align-items: center;
    justify-content: center;
    gap: 16px;
}
.next svg {
    width: 26px;
    height: 26px;
}
.float-c {
    position: absolute;
    left: 2017px;
    top: 32px;
    width: 80px;
    height: 80px;
}

/* taskbar */
.taskbar {
    height: 95px;
    flex: none;
    background: linear-gradient(to right, #1c2033 0%, #1c2036 55%, #1f1f33 80%, #2f1d2b 100%);
    border-top: 1px solid #3f4050;
    display: grid;
    grid-template-columns: 1fr auto 1fr;
    font-family: "Noto Sans", "Open Sans", sans-serif;
    color: #fff;
}
.task-apps {
    display: flex;
}
.task-app {
    width: 88px;
    height: 94px;
    padding-top: 23px;
    display: flex;
    flex-direction: column;
    align-items: center;
    position: relative;
}
.task-app svg, .zalo {
    width: 48px;
    height: 48px;
    flex: none;
}
.task-app--active::before {
    content: "";
    position: absolute;
    left: 8px;
    top: 6px;
    width: 80px;
    height: 80px;
    border-radius: 12px;
    background: #2b2c46;
    box-shadow: 5px 0 0 #25263f;
}
.task-app--active svg, .task-app--active i {
    position: relative;
}
.task-dot {
    width: 12px;
    height: 6px;
    margin-top: 8px;
    border-radius: 3px;
    background: #9a9aa5;
}
.task-dot--wide {
    width: 32px;
    background: #c8c8c8;
}
.zalo {
    background: #fff;
    border-radius: 20px 20px 20px 8px;
    border-left: 3px solid #0b62e6;
    border-bottom: 3px solid #0b62e6;
    color: #0b62e6;
    font-size: 17px;
    font-weight: 600;
    line-height: 44px;
    text-align: center;
}
.ppt-letter {
    fill: #fff;
    font-size: 26px;
    font-weight: 700;
}
.tray {
    display: flex;
    align-items: center;
    justify-content: flex-end;
    padding-right: 39px;
}
.tray-caret {
    width: 24px;
    height: 14px;
}
.tray-mic {
    width: 24px;
    height: 32px;
    margin-left: 40px;
}
.tray-lang {
    width: 60px;
    margin-left: 35px;
    font-size: 23px;
    line-height: 32px;
    text-align: center;
}
.tray-wifi {
    width: 34px;
    height: 28px;
    margin-left: 29px;
}
.tray-sound {
    width: 34px;
    height: 32px;
    margin-left: 14px;
}
.tray-batt {
    width: 34px;
    height: 28px;
    margin-left: 15px;
}
.tray-clock {
    width: 122px;
    margin-left: 33px;
    font-size: 23px;
    line-height: 32px;
    text-align: right;
    white-space: nowrap;
}
```
